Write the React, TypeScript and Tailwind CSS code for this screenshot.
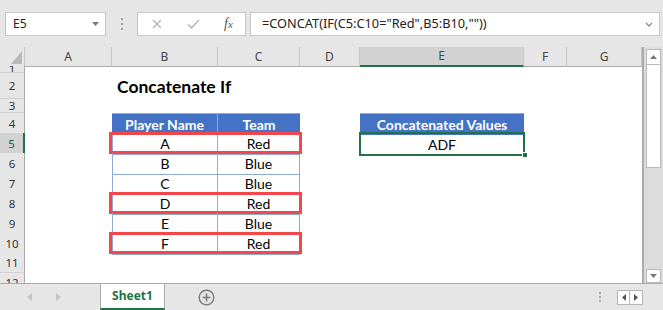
import React from "react";

const cols = "grid grid-cols-[25px_87px_106px_82px_60px_164px_43px_1fr]";
const calibri = "font-['Lato',sans-serif]";
const ui = "font-['Noto_Sans',sans-serif]";

type Row = {
  n: number;
  h: string;
  kind?: "title" | "head" | "data";
  player?: string;
  team?: string;
  red?: boolean;
};

const rows: Row[] = [
  { n: 1, h: "h-[7px]" },
  { n: 2, h: "h-[26px]", kind: "title" },
  { n: 3, h: "h-[14px]" },
  { n: 4, h: "h-[20px]", kind: "head" },
  { n: 5, h: "h-[20px]", kind: "data", player: "A", team: "Red", red: true },
  { n: 6, h: "h-[20px]", kind: "data", player: "B", team: "Blue" },
  { n: 7, h: "h-[20px]", kind: "data", player: "C", team: "Blue" },
  { n: 8, h: "h-[20px]", kind: "data", player: "D", team: "Red", red: true },
  { n: 9, h: "h-[20px]", kind: "data", player: "E", team: "Blue" },
  { n: 10, h: "h-[20px]", kind: "data", player: "F", team: "Red", red: true },
  { n: 11, h: "h-[20px]" },
  { n: 12, h: "h-[20px]" },
];

function FormulaBar() {
  return (
    <div className="flex h-[47px] items-start bg-[#e6e6e6] pt-[12px]">
      <div className={`ml-[5px] flex h-[24px] w-[101px] items-center justify-between border border-[#c6c6c6] bg-white pl-[7px] pr-[6px] ${ui} text-[12px] text-[#222]`}>
        <span>E5</span>
        <svg width="7" height="4" viewBox="0 0 7 4">
          <path d="M0 0h7L3.5 4z" fill="#777" />
        </svg>
      </div>
      <div className="flex h-[24px] w-[31px] flex-col items-center justify-center gap-[3px]">
        <span className="h-[2px] w-[2px] bg-[#a0a0a0]" />
        <span className="h-[2px] w-[2px] bg-[#a0a0a0]" />
        <span className="h-[2px] w-[2px] bg-[#a0a0a0]" />
      </div>
      <div className="flex h-[24px] w-[109px] items-center border border-[#c6c6c6] bg-white">
        <svg className="ml-[14px]" width="10" height="10" viewBox="0 0 10 10">
          <path d="M1 1l8 8M9 1l-8 8" stroke="#b4b4b4" strokeWidth="1.3" />
        </svg>
        <svg className="ml-[25px]" width="13" height="10" viewBox="0 0 13 10">
          <path d="M1 5.5l3.5 3.5L12 1" stroke="#b4b4b4" strokeWidth="1.4" fill="none" />
        </svg>
        <span className="ml-[24px] font-['Liberation_Serif',serif] text-[14px] italic leading-none text-[#555]">
          f<span className="text-[11px]">x</span>
        </span>
      </div>
      <div className={`ml-[4px] mr-[3px] flex h-[24px] flex-1 items-center justify-between border border-[#c6c6c6] bg-white pl-[11px] pr-[6px] ${ui} text-[12.75px] text-[#222]`}>
        <span>=CONCAT(IF(C5:C10="Red",B5:B10,""))</span>
        <svg width="8" height="5" viewBox="0 0 8 5">
          <path d="M1 1l3 3 3-3" stroke="#888" strokeWidth="1.3" fill="none" />
        </svg>
      </div>
    </div>
  );
}

function ColumnHeaders() {
  const letters = ["A", "B", "C", "D", "E", "F", "G"];
  return (
    <div className={`${cols} h-[19px] bg-[#e6e6e6] ${ui} text-[12px] text-[#444]`}>
      <div className="flex items-end justify-end border-b border-r border-b-[#ababab] border-r-[#c6c6c6] pb-[2px] pr-[2px]">
        <svg width="11" height="13" viewBox="0 0 11 13">
          <path d="M11 0v13H0z" fill="#b9b9b9" />
        </svg>
      </div>
      {letters.map((l) =>
        l === "E" ? (
          <div key={l} className="flex items-center justify-center border-b-2 border-r border-b-[#217346] border-r-[#c6c6c6] bg-[#d2d2d2] text-[#1e5b39]">
            {l}
          </div>
        ) : (
          <div key={l} className="flex items-center justify-center border-b border-r border-b-[#ababab] border-r-[#c6c6c6]">
            {l}
          </div>
        )
      )}
    </div>
  );
}

function RowHead({ n, sel }: { n: number; sel: boolean }) {
  return sel ? (
    <div className={`flex items-center justify-center overflow-hidden border-b border-r-2 border-b-[#d0d0d0] border-r-[#217346] bg-[#d2d2d2] ${ui} text-[11.5px] text-[#1e5b39]`}>
      {n}
    </div>
  ) : (
    <div className={`flex items-center justify-center overflow-hidden border-b border-r border-b-[#d0d0d0] border-r-[#ababab] bg-[#e6e6e6] ${ui} text-[11.5px] text-[#333]`}>
      {n}
    </div>
  );
}

function SheetRow({ r }: { r: Row }) {
  return (
    <div className={`${cols} ${r.h} ${calibri} text-[14px] text-black`}>
      <RowHead n={r.n} sel={r.n === 5} />
      <div />
      {r.kind === "title" && (
        <div className="flex items-end whitespace-nowrap pb-[1px] pl-[5px] text-[17.5px] font-bold leading-[22px]">
          Concatenate If
        </div>
      )}
      {r.kind === "head" && (
        <>
          <div className="flex items-center justify-center border-r border-t border-[#8eaadb] bg-[#4472c4] font-bold text-white">
            Player Name
          </div>
          <div className="flex items-center justify-center border-t border-[#8eaadb] bg-[#4472c4] font-bold text-white">
            Team
          </div>
          <div />
          <div className="flex items-center justify-center border-t border-[#8eaadb] bg-[#4472c4] font-bold text-white">
            Concatenated Values
          </div>
        </>
      )}
      {r.kind === "data" && (
        <>
          <div className="relative flex items-center justify-center border-b border-l border-r border-[#8eaadb]">
            {r.player}
            {r.red && (
              <div className="pointer-events-none absolute left-[-4px] top-[-1px] h-[22px] w-[193px] border-[3px] border-[#f3474b]" />
            )}
          </div>
          <div className="flex items-center justify-center border-b border-r border-[#8eaadb]">
            {r.team}
          </div>
          <div />
          {r.n === 5 ? (
            <div className="relative flex items-center justify-center">
              ADF
              <div className="absolute bottom-[-1px] left-[-1px] right-[-1px] top-[-1px] border-2 border-[#217346]" />
              <div className="absolute bottom-[-3px] right-[-4px] h-[6px] w-[6px] border border-white bg-[#217346]" />
            </div>
          ) : (
            <div />
          )}
        </>
      )}
    </div>
  );
}

function ScrollBar() {
  return (
    <div className="flex w-[20px] flex-col border-b border-l border-[#ababab] bg-[#dcdcdc] px-[2px] pt-[2px]">
      <div className="flex h-[16px] items-center justify-center border border-[#b9b9b9] bg-white">
        <svg width="7" height="4" viewBox="0 0 7 4">
          <path d="M0 4h7L3.5 0z" fill="#777" />
        </svg>
      </div>
      <div className="h-[103px] border border-t-0 border-[#b9b9b9] bg-white" />
      <div className="flex-1" />
      <div className="flex h-[14px] items-center justify-center border border-[#b9b9b9] bg-white">
        <svg width="7" height="4" viewBox="0 0 7 4">
          <path d="M0 0h7L3.5 4z" fill="#777" />
        </svg>
      </div>
    </div>
  );
}

function TabBar() {
  return (
    <div className="flex h-[26px] items-stretch bg-[#e6e6e6]">
      <div className="flex w-[100px] items-center">
        <svg className="ml-[27px]" width="5" height="8" viewBox="0 0 5 8">
          <path d="M5 0v8L0 4z" fill="#c4c4c4" />
        </svg>
        <svg className="ml-[24px]" width="5" height="8" viewBox="0 0 5 8">
          <path d="M0 0v8l5-4z" fill="#c4c4c4" />
        </svg>
      </div>
      <div className={`flex w-[65px] items-center justify-center border-b-2 border-l border-r border-b-[#217346] border-l-[#ababab] border-r-[#ababab] bg-white ${ui} text-[12px] font-bold text-[#217346]`}>
        Sheet1
      </div>
      <div className="flex flex-1 items-center">
        <svg className="ml-[33px]" width="17" height="17" viewBox="0 0 17 17">
          <circle cx="8.5" cy="8.5" r="7.3" stroke="#7a7a7a" strokeWidth="1.4" fill="none" />
          <path d="M8.5 4.5v8M4.5 8.5h8" stroke="#7a7a7a" strokeWidth="1.6" />
        </svg>
      </div>
      <div className="flex items-center">
        <div className="flex flex-col gap-[2px]">
          <span className="h-[2px] w-[2px] bg-[#a8a8a8]" />
          <span className="h-[2px] w-[2px] bg-[#a8a8a8]" />
          <span className="h-[2px] w-[2px] bg-[#a8a8a8]" />
        </div>
        <div className="ml-[16px] mr-[20px] flex h-[15px] border border-[#b5b5b5] bg-white">
          <div className="flex w-[12px] items-center justify-center border-r border-[#b5b5b5]">
            <svg width="4" height="7" viewBox="0 0 4 7">
              <path d="M4 0v7L0 3.5z" fill="#555" />
            </svg>
          </div>
          <div className="flex w-[12px] items-center justify-center">
            <svg width="4" height="7" viewBox="0 0 4 7">
              <path d="M0 0v7l4-3.5z" fill="#555" />
            </svg>
          </div>
        </div>
      </div>
    </div>
  );
}

export default function App() {
  return (
    <div className="h-[310px] w-[663px] overflow-hidden bg-[#e6e6e6]">
      <FormulaBar />
      <div className="flex h-[237px]">
        <div className="flex flex-1 flex-col border-b border-r border-[#ababab] bg-white">
          <ColumnHeaders />
          <div className="flex-1 overflow-hidden">
            {rows.map((r) => (
              <SheetRow key={r.n} r={r} />
            ))}
          </div>
        </div>
        <ScrollBar />
      </div>
      <TabBar />
    </div>
  );
}
